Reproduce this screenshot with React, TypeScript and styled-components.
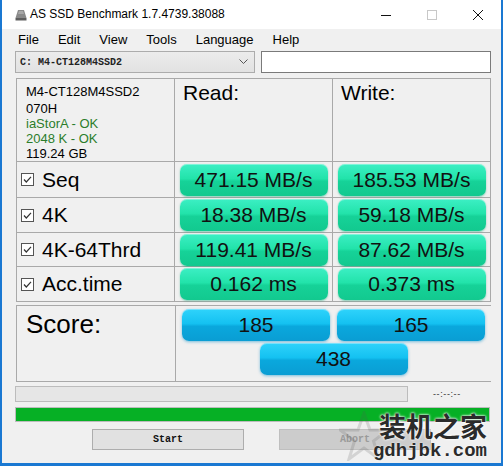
import React from "react";
import styled, { createGlobalStyle, css } from "styled-components";

const GlobalStyle = createGlobalStyle`
  html, body {
    margin: 0;
    padding: 0;
    background: #ffffff;
  }
  * {
    box-sizing: border-box;
  }
`;

const Window = styled.div`
  position: relative;
  width: 503px;
  height: 466px;
  border: solid #1a78d2;
  border-width: 0 2px 3px 2px;
  background: #f0f0f0;
  display: flex;
  flex-direction: column;
  font-family: "Liberation Sans", Arial, sans-serif;
  color: #000;
  overflow: hidden;
`;

const TitleBar = styled.div`
  height: 29px;
  background: #ffffff;
  display: flex;
  align-items: center;
  padding-left: 13px;
`;

const Title = styled.span`
  margin-left: 3px;
  margin-top: -2px;
  font-size: 12px;
  color: #000;
`;

const Controls = styled.div`
  margin-left: auto;
  display: flex;
  height: 100%;
`;

const ControlButton = styled.div<{ $disabled?: boolean }>`
  width: 46px;
  height: 100%;
  display: flex;
  align-items: center;
  justify-content: center;
  color: ${(p) => (p.$disabled ? "#c8c8c8" : "#111")};
`;

const MenuBar = styled.div`
  height: 21px;
  display: flex;
  align-items: center;
  gap: 19px;
  padding-left: 16px;
  font-size: 13px;
`;

const DriveRow = styled.div`
  margin-top: 1px;
  height: 22px;
  display: flex;
  gap: 6px;
  padding-left: 13px;
`;

const Combo = styled.div`
  width: 240px;
  height: 22px;
  border: 1px solid #acacac;
  background: linear-gradient(#ececec, #e2e2e2);
  display: flex;
  align-items: center;
  padding: 0 6px 0 4px;
  font-family: "Liberation Mono", "Courier New", monospace;
  font-size: 10px;
  font-weight: 600;
  color: #222;
`;

const ComboText = styled.span`
  flex: 1;
`;

const TextBox = styled.div`
  width: 230px;
  height: 22px;
  border: 1px solid #7a7a7a;
  background: #ffffff;
`;

const ResultGrid = styled.div`
  margin: 5px 0 0 14px;
  width: 475px;
  display: grid;
  grid-template-columns: 157px 157px 157px;
  grid-template-rows: 82px 35px 34px 33px 34px;
  gap: 1px;
  padding: 1px;
  background: #a9a9a9;
`;

const Cell = styled.div`
  background: #f0f0f0;
  display: flex;
  align-items: center;
  justify-content: center;
`;

const HeadCell = styled(Cell)`
  align-items: flex-start;
  justify-content: flex-start;
  padding: 2px 8px;
  font-size: 21px;
`;

const InfoCell = styled(Cell)`
  flex-direction: column;
  align-items: flex-start;
  justify-content: flex-start;
  padding: 5px 9px;
  font-size: 13px;
  line-height: 15px;
`;

const InfoLine = styled.div<{ $ok?: boolean; $first?: boolean }>`
  color: ${(p) => (p.$ok ? "#2b7d2b" : "#000")};
  margin-bottom: ${(p) => (p.$first ? "2px" : "0")};
`;

const LabelCell = styled(Cell)`
  justify-content: flex-start;
  padding-left: 4px;
  gap: 8px;
  font-size: 21px;
`;

const pillTones = {
  green: css`
    background: linear-gradient(
      #3cefc4 0%,
      #22e3aa 46%,
      #16d298 54%,
      #12c98f 100%
    );
    box-shadow: 0 1px 2px rgba(0, 160, 110, 0.45),
      inset 0 1px 0 rgba(255, 255, 255, 0.35);
  `,
  blue: css`
    background: linear-gradient(
      #2fd3fb 0%,
      #14c1f1 46%,
      #0aa8dd 54%,
      #0a9dd3 100%
    );
    box-shadow: 0 1px 3px rgba(0, 140, 200, 0.5),
      inset 0 1px 0 rgba(255, 255, 255, 0.35);
  `,
};

const Pill = styled.div<{ $tone: "green" | "blue" }>`
  width: 148px;
  height: 32px;
  border-radius: 7px;
  display: flex;
  align-items: center;
  justify-content: center;
  font-size: 21px;
  color: #111;
  ${(p) => pillTones[p.$tone]}
`;

const ScoreBox = styled.div`
  margin: 3px 0 0 14px;
  width: 475px;
  height: 77px;
  display: grid;
  grid-template-columns: 158px 315px;
  gap: 1px;
  padding: 1px;
  background: #a9a9a9;
`;

const ScoreLabel = styled(Cell)`
  align-items: flex-start;
  justify-content: flex-start;
  padding: 3px 9px;
  font-size: 26px;
`;

const ScorePills = styled(Cell)`
  flex-wrap: wrap;
  align-content: flex-start;
  column-gap: 7px;
  row-gap: 2px;
  padding-top: 3px;
`;

const ProgressRow = styled.div`
  margin: 4px 0 0 13px;
  height: 16px;
  display: flex;
  align-items: center;
`;

const Progress = styled.div`
  width: 393px;
  height: 16px;
  border: 1px solid #bcbcbc;
  background: #e6e6e6;
`;

const Timer = styled.span`
  margin-left: 25px;
  font-family: "Liberation Sans", Arial, sans-serif;
  font-size: 9px;
  letter-spacing: 0.6px;
  color: #333;
`;

const GreenBar = styled.div`
  margin: 5px 0 0 13px;
  width: 475px;
  height: 15px;
  border: 1px solid #bcbcbc;
  background: #06b025;
`;

const ButtonRow = styled.div`
  margin: 7px 0 0 90px;
  display: flex;
  gap: 35px;
`;

const Button = styled.div<{ $disabled?: boolean }>`
  width: 152px;
  height: 21px;
  display: flex;
  align-items: center;
  justify-content: center;
  border: 1px solid ${(p) => (p.$disabled ? "#bfbfbf" : "#adadad")};
  background: ${(p) => (p.$disabled ? "#cccccc" : "#e1e1e1")};
  color: ${(p) => (p.$disabled ? "#9a9a9a" : "#111")};
  font-family: "Liberation Mono", "Courier New", monospace;
  font-size: 10px;
  font-weight: 600;
`;

const Watermark = styled.div`
  position: absolute;
  right: 14px;
  bottom: 2px;
  display: flex;
  flex-direction: column;
  align-items: flex-end;
  pointer-events: none;
`;

const WatermarkTitle = styled.div`
  font-family: "Noto Sans CJK SC", sans-serif;
  font-weight: 700;
  font-size: 27px;
  line-height: 30px;
  color: #2b2b2b;
  text-shadow: 0 0 2px #fff, 0 0 3px #fff;
`;

const WatermarkUrl = styled.div`
  font-family: "Liberation Mono", monospace;
  font-weight: 700;
  font-size: 19px;
  line-height: 20px;
  color: #2b2b2b;
  text-shadow: 0 0 2px #fff;
`;

const WatermarkStar = styled.svg`
  position: absolute;
  right: 112px;
  bottom: 2px;
  opacity: 0.18;
`;

const Check = () => (
  <svg width="13" height="13" viewBox="0 0 13 13">
    <rect x="0.5" y="0.5" width="12" height="12" fill="#fff" stroke="#555" />
    <path d="M3 6.5 L5.3 9 L10 3.8" fill="none" stroke="#333" strokeWidth="1.2" />
  </svg>
);

const AppIcon = () => (
  <svg width="12" height="12" viewBox="0 0 12 12">
    <path d="M3 1 H9 L11.5 9 H0.5 Z" fill="#8a8a8a" />
    <path d="M0.5 9 H11.5 V11.5 H0.5 Z" fill="#5e5e5e" />
    <path d="M4 2 H8 L9 5 H3 Z" fill="#a8a8a8" />
  </svg>
);

const rows = [
  { name: "Seq", read: "471.15 MB/s", write: "185.53 MB/s" },
  { name: "4K", read: "18.38 MB/s", write: "59.18 MB/s" },
  { name: "4K-64Thrd", read: "119.41 MB/s", write: "87.62 MB/s" },
  { name: "Acc.time", read: "0.162 ms", write: "0.373 ms" },
];

const menus = ["File", "Edit", "View", "Tools", "Language", "Help"];

export default function App() {
  return (
    <>
      <GlobalStyle />
      <Window>
        <TitleBar>
          <AppIcon />
          <Title>AS SSD Benchmark 1.7.4739.38088</Title>
          <Controls>
            <ControlButton>
              <svg width="10" height="10" viewBox="0 0 10 10">
                <path d="M0 5.5 H10" stroke="#111" strokeWidth="1" />
              </svg>
            </ControlButton>
            <ControlButton $disabled>
              <svg width="10" height="10" viewBox="0 0 10 10">
                <rect x="0.5" y="0.5" width="9" height="9" fill="none" stroke="#c8c8c8" />
              </svg>
            </ControlButton>
            <ControlButton>
              <svg width="10" height="10" viewBox="0 0 10 10">
                <path d="M0 0 L10 10 M10 0 L0 10" stroke="#111" strokeWidth="1" />
              </svg>
            </ControlButton>
          </Controls>
        </TitleBar>

        <MenuBar>
          {menus.map((m) => (
            <span key={m}>{m}</span>
          ))}
        </MenuBar>

        <DriveRow>
          <Combo>
            <ComboText>C: M4-CT128M4SSD2</ComboText>
            <svg width="9" height="6" viewBox="0 0 9 6">
              <path d="M0.5 0.5 L4.5 4.5 L8.5 0.5" fill="none" stroke="#555" />
            </svg>
          </Combo>
          <TextBox />
        </DriveRow>

        <ResultGrid>
          <InfoCell>
            <InfoLine $first>M4-CT128M4SSD2</InfoLine>
            <InfoLine>070H</InfoLine>
            <InfoLine $ok>iaStorA - OK</InfoLine>
            <InfoLine $ok>2048 K - OK</InfoLine>
            <InfoLine>119.24 GB</InfoLine>
          </InfoCell>
          <HeadCell>Read:</HeadCell>
          <HeadCell>Write:</HeadCell>
          {rows.map((r) => (
            <React.Fragment key={r.name}>
              <LabelCell>
                <Check />
                {r.name}
              </LabelCell>
              <Cell>
                <Pill $tone="green">{r.read}</Pill>
              </Cell>
              <Cell>
                <Pill $tone="green">{r.write}</Pill>
              </Cell>
            </React.Fragment>
          ))}
        </ResultGrid>

        <ScoreBox>
          <ScoreLabel>Score:</ScoreLabel>
          <ScorePills>
            <Pill $tone="blue">185</Pill>
            <Pill $tone="blue">165</Pill>
            <Pill $tone="blue">438</Pill>
          </ScorePills>
        </ScoreBox>

        <ProgressRow>
          <Progress />
          <Timer>--:--:--</Timer>
        </ProgressRow>

        <GreenBar />

        <ButtonRow>
          <Button>Start</Button>
          <Button $disabled>Abort</Button>
        </ButtonRow>

        <WatermarkStar width="50" height="50" viewBox="0 0 50 50">
          <path
            d="M25 2 L31 19 L49 19 L34.5 30 L40 48 L25 37 L10 48 L15.5 30 L1 19 L19 19 Z"
            fill="none"
            stroke="#555"
            strokeWidth="3"
          />
        </WatermarkStar>
        <Watermark>
          <WatermarkTitle>装机之家</WatermarkTitle>
          <WatermarkUrl>gdhjbk.com</WatermarkUrl>
        </Watermark>
      </Window>
    </>
  );
}
